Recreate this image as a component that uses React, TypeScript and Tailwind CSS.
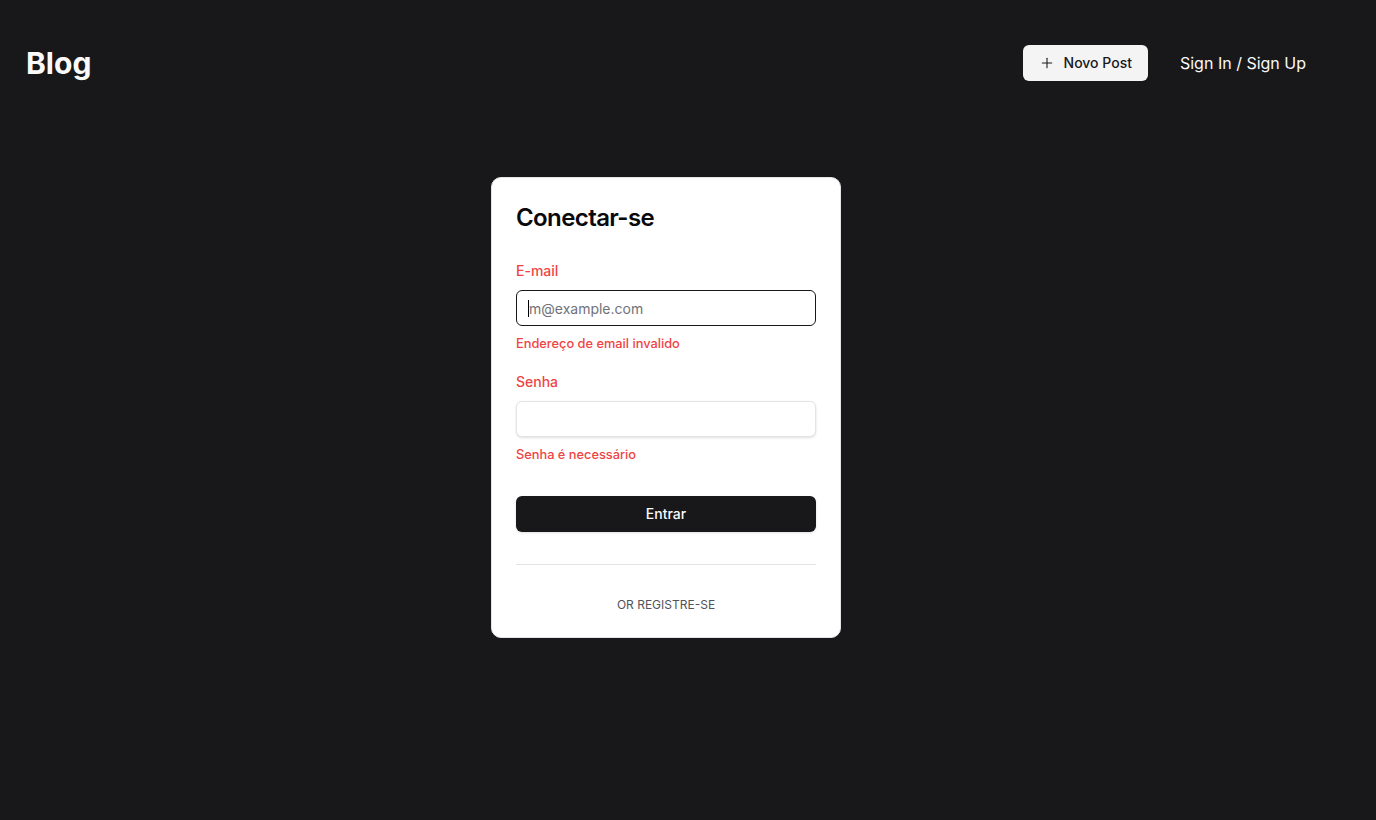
import React from 'react';
import { Plus } from 'lucide-react';

const font = { fontFamily: 'Inter, "Noto Sans", sans-serif' };

export default function App() {
   return (
      <div className="min-h-[820px] w-full bg-[#18181b]" style={font}>
         <div className="w-[1332px]">
            {/* Header */}
            <header className="flex items-center justify-between px-[26px] pt-[45px] pb-[96px]">
               <span className="text-3xl font-bold text-[#fafafa] leading-9">Blog</span>
               <div className="flex items-center gap-8">
                  <button className="flex h-9 items-center gap-[9px] rounded-md bg-[#f4f4f5] px-4 text-sm font-medium text-[#18181b]">
                     <Plus size={16} strokeWidth={1.6} />
                     Novo Post
                  </button>
                  <span className="text-base font-normal text-[#fafafa]">Sign In / Sign Up</span>
               </div>
            </header>

            {/* Login card */}
            <div className="flex justify-center">
               <div className="w-[350px] rounded-[10px] border border-[#e4e4e7] bg-white p-6">
                  <h1 className="text-2xl font-semibold tracking-tight text-[#09090b]">Conectar-se</h1>

                  <form className="mt-[27px] flex flex-col">
                     <label className="text-sm font-medium leading-5 text-[#ef4444]">E-mail</label>
                     <div className="relative mt-[9px]">
                        <input
                           className="h-9 w-full rounded-md border border-[#18181b] bg-white px-3 text-sm text-[#09090b] placeholder:text-[#71717a] outline-none"
                           placeholder="m@example.com"
                           readOnly
                        />
                        <span className="absolute left-[12px] top-[10px] h-[17px] w-px bg-black"></span>
                     </div>
                     <p className="mt-2 text-[12.8px] font-medium leading-[19.2px] text-[#ef4444]">Endereço de email invalido</p>

                     <label className="mt-[19px] text-sm font-medium leading-5 text-[#ef4444]">Senha</label>
                     <input
                        type="password"
                        className="mt-[9px] h-9 w-full rounded-md border border-[#e4e4e7] bg-white px-3 text-sm shadow-sm outline-none"
                        readOnly
                     />
                     <p className="mt-2 text-[12.8px] font-medium leading-[19.2px] text-[#ef4444]">Senha é necessário</p>

                     <button
                        type="button"
                        className="mt-8 h-9 w-full rounded-md bg-[#18181b] text-sm font-medium text-[#fafafa] shadow"
                     >
                        Entrar
                     </button>
                  </form>

                  <div className="mt-8 h-px w-full bg-[#e4e4e7]"></div>
                  <p className="mt-8 text-center text-xs uppercase leading-4 text-[#52525b]">Or registre-se</p>
               </div>
            </div>
         </div>
      </div>
   );
}
